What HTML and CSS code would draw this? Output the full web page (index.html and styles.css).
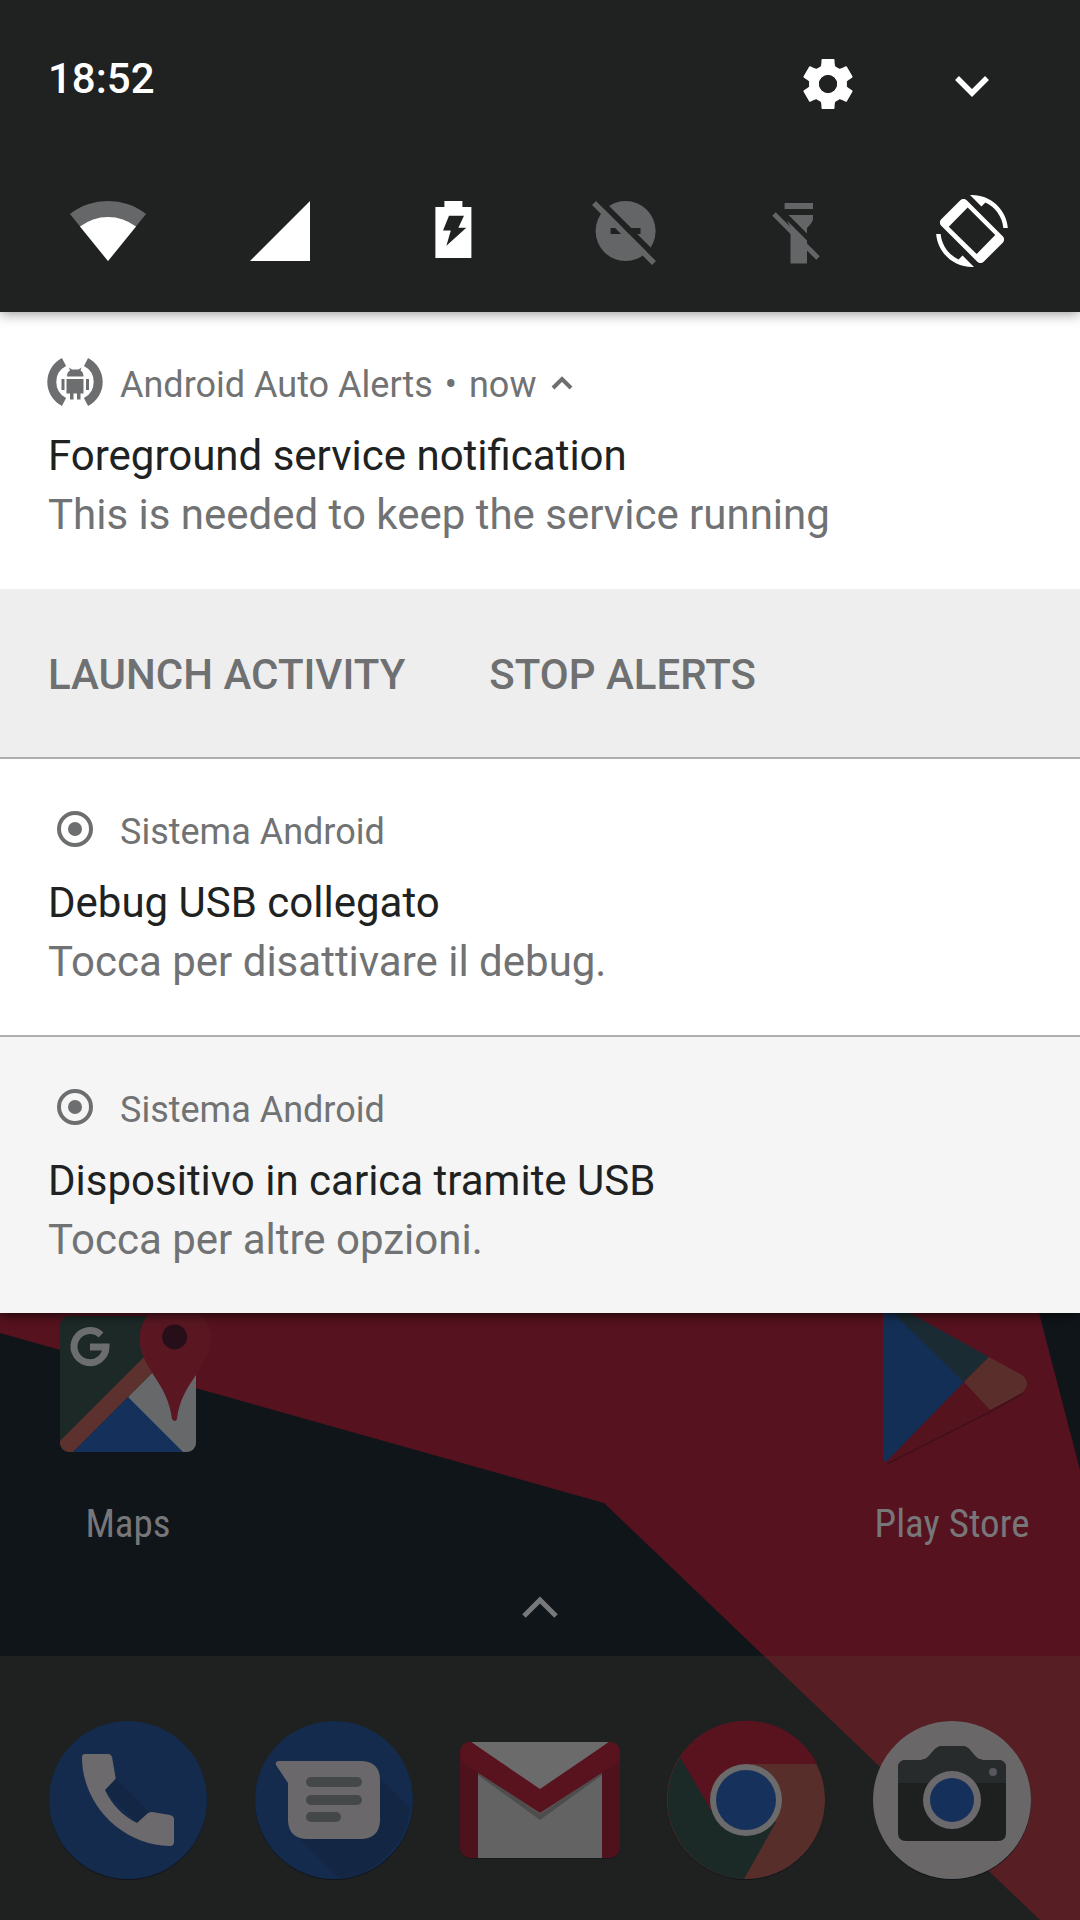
FILE: index.html
```html
<!DOCTYPE html>
<html lang="it">
<head>
<meta charset="utf-8">
<meta name="viewport" content="width=device-width, initial-scale=1">
<title>Notifiche</title>
<link rel="stylesheet" href="styles.css">
</head>
<body>
<div class="screen">
  <div class="shade">
    <header class="status">
      <div class="status-top">
        <time class="clock">18:52</time>
        <div class="status-actions">
          <button class="icon-button" type="button" aria-label="Impostazioni">
            <svg class="icon" viewBox="-36 -36 72 72">
              <defs><path id="tooth" d="M-8 -16 Q-6.500 -18 -6.500 -24 Q-6.500 -25 -5.500 -25 H5.500 Q6.500 -25 6.500 -24 Q6.500 -18 8 -16Z"/></defs>
              <g fill="#fff">
                <use href="#tooth"/><use href="#tooth" transform="rotate(60)"/><use href="#tooth" transform="rotate(120)"/>
                <use href="#tooth" transform="rotate(180)"/><use href="#tooth" transform="rotate(240)"/><use href="#tooth" transform="rotate(300)"/>
                <circle r="14" fill="none" stroke="#fff" stroke-width="10"/>
              </g>
              <circle r="9" fill="#202121"/>
            </svg>
          </button>
          <button class="icon-button" type="button" aria-label="Espandi">
            <svg class="icon" viewBox="0 0 72 72"><path d="M21 30 L36 45 L51 30" fill="none" stroke="#fff" stroke-width="5.500"/></svg>
          </button>
        </div>
      </div>
      <div class="tiles">
        <button class="icon-button" type="button" aria-label="Wi-Fi">
          <svg class="icon" viewBox="0 0 72 72"><path d="M36 66 L-2 19 A62 62 0 0 1 74 19Z" fill="#666768"/><path d="M36 66 L8 31.500 A46 46 0 0 1 64 31.500Z" fill="#fff"/></svg>
        </button>
        <button class="icon-button" type="button" aria-label="Rete mobile">
          <svg class="icon" viewBox="0 0 72 72"><path d="M5 66 H65 V6Z" fill="#fff"/></svg>
        </button>
        <button class="icon-button" type="button" aria-label="Batteria">
          <svg class="icon" viewBox="0 0 72 72"><path d="M17.400 12 H26.400 V6 H44.400 V12 H53.400 V63 H17.400Z" fill="#fff"/><path d="M31 20.700 H46 L40.400 32.700 H48.300 L28.400 50.700 L32.800 35.500 H25Z" fill="#202121"/></svg>
        </button>
        <button class="icon-button" type="button" aria-label="Non disturbare">
          <svg class="icon" viewBox="0 0 72 72"><circle cx="35.600" cy="36" r="30" fill="#646566"/><path d="M20.600 33 H50.500 V39 H20.600Z" fill="#202121"/><path d="M6 2 L70 66" stroke="#202121" stroke-width="6"/><path d="M4 8 L64 68" stroke="#646566" stroke-width="5.500"/></svg>
        </button>
        <button class="icon-button" type="button" aria-label="Torcia">
          <svg class="icon" viewBox="0 0 72 72"><path d="M21.600 8 H50 V14 H21.600Z M21.600 20 H50 V24 Q50 27 44 33 V68.500 H27.500 V33Z" fill="#646566"/><path d="M17 15 L48 46" stroke="#202121" stroke-width="5"/><path d="M11 19 L55 63" stroke="#646566" stroke-width="5"/></svg>
        </button>
        <button class="icon-button" type="button" aria-label="Rotazione automatica">
          <svg class="icon" viewBox="0 0 24 24"><path fill="#fff" fill-rule="evenodd" d="M16.480 2.520c3.270 1.550 5.610 4.720 5.970 8.480h1.500C23.440 4.840 18.290 0 12 0l-.66.03 3.810 3.810 1.330-1.320zm-6.250-.77c-.59-.59-1.540-.59-2.120 0L1.750 8.110c-.59.59-.59 1.540 0 2.120l12.020 12.020c.59.59 1.540.59 2.120 0l6.360-6.360c.59-.59.59-1.540 0-2.120L10.230 1.750zM4.250 10.550 L10.550 4.150 L19.750 13.350 L13.550 19.650Z M7.520 21.480C4.250 19.940 1.910 16.760 1.550 13H.05C.56 19.160 5.710 24 12 24l.66-.03-3.810-3.810-1.330 1.320z"/></svg>
        </button>
      </div>
    </header>

    <main class="notifications">
      <article class="notification">
        <div class="content">
          <div class="meta">
            <svg class="app-icon" viewBox="0 0 54 54">
              <g fill="none" stroke="#6d6e6f" stroke-width="9"><path d="M16 7 A22.500 22.500 0 0 0 16 47"/><path d="M38 7 A22.500 22.500 0 0 1 38 47"/></g>
              <path fill="#6d6e6f" d="M19 21.500 Q19 17 22 15.500 L21 12.500 L24 14.500 H30.500 L33.500 12.500 L32.500 15.500 Q35.500 17 35.500 21.500Z M18.500 24 H35.500 V38.500 H32.500 V44.500 H29 V38.500 H25.500 V44.500 H22 V38.500 H18.500Z M13.500 24 H16.500 V35 H13.500Z M38 24 H41 V35 H38Z"/>
            </svg>
            <span>Android Auto Alerts</span><span>•</span><span>now</span>
            <svg class="collapse" viewBox="0 0 24 24"><path d="M3 15 L12 6 L21 15" fill="none" stroke="#6d6e6f" stroke-width="4"/></svg>
          </div>
          <h2 class="title">Foreground service notification</h2>
          <p class="text">This is needed to keep the service running</p>
        </div>
        <div class="actions">
          <button class="action" type="button">LAUNCH ACTIVITY</button>
          <button class="action" type="button">STOP ALERTS</button>
        </div>
      </article>
      <article class="notification">
        <div class="content">
          <div class="meta">
            <svg class="app-icon" viewBox="0 0 54 54"><circle cx="27" cy="27" r="16" fill="none" stroke="#6d6e6f" stroke-width="4"/><circle cx="27" cy="27" r="7" fill="#6d6e6f"/></svg>
            <span>Sistema Android</span>
          </div>
          <h2 class="title">Debug USB collegato</h2>
          <p class="text">Tocca per disattivare il debug.</p>
        </div>
      </article>
      <article class="notification muted">
        <div class="content">
          <div class="meta">
            <svg class="app-icon" viewBox="0 0 54 54"><circle cx="27" cy="27" r="16" fill="none" stroke="#6d6e6f" stroke-width="4"/><circle cx="27" cy="27" r="7" fill="#6d6e6f"/></svg>
            <span>Sistema Android</span>
          </div>
          <h2 class="title">Dispositivo in carica tramite USB</h2>
          <p class="text">Tocca per altre opzioni.</p>
        </div>
      </article>
    </main>
  </div>

  <section class="home">
    <svg class="wallpaper" viewBox="0 0 1080 607" preserveAspectRatio="none">
      <path fill="#10151a" d="M0 0H1080V607H0Z"/>
      <path fill="#56121e" d="M0 0 H1039 L1080 157 V607 H1040 L604 190 L0 20Z"/>
    </svg>
    <nav class="apps">
      <a class="app" href="#maps">
        <svg class="launcher" viewBox="0 0 136 136">
          <defs><clipPath id="tile"><rect y="0" width="136" height="136" rx="9"/></clipPath></defs>
          <g clip-path="url(#tile)">
            <path fill="#1c2927" d="M0 0H136V136H0Z"/>
            <path fill="#67686a" d="M68 81 L110 39 H136 V136 H110Z"/>
            <path fill="#5d322e" d="M0 125 L84 41 L100 49 L13 136 H0Z"/>
            <path fill="#15305a" d="M68 81 L13 136 H123Z"/>
          </g>
          <path fill="#5a1722" d="M79.500 22 C79.500 52 108 66 112 103 Q115 107 117 103 C121 66 150.700 52 150.700 22 A35.600 35.600 0 0 0 79.500 22Z"/>
          <circle cx="114.600" cy="21" r="12.500" fill="#260f18"/>
          <path d="M41 19 A16 16 0 1 0 46 31 H30" fill="none" stroke="#6c6d6e" stroke-width="7"/>
        </svg>
        <span class="label">Maps</span>
      </a>
      <a class="app play" href="#play-store">
        <svg class="launcher" viewBox="0 0 136 136">
          <path d="M3 148 L106 96 L139 77" fill="none" stroke="#330f17" stroke-width="1"/>
          <path fill="#55131e" d="M80 66 L106 94 L2 146Z"/>
          <path fill="#142f56" d="M-1 -14 L80 66 L2 146 Q-1 144 -1 140Z"/>
          <path fill="#1b2b33" d="M-2 -14 L6 -14 L105 41 L80 66Z"/>
          <path fill="#592e2b" d="M105 41 L138 59 Q148 67 138 77 L106 94 L80 66Z"/>
        </svg>
        <span class="label">Play Store</span>
      </a>
    </nav>
    <button class="drawer" type="button" aria-label="Tutte le app">
      <svg class="drawer-icon" viewBox="0 0 36 24"><path d="M2 20 L18 4 L34 20" fill="none" stroke="#77787a" stroke-width="5"/></svg>
    </button>
    <nav class="dock">
      <a href="#telefono" aria-label="Telefono">
        <svg class="dock-icon" viewBox="0 0 160 160">
          <circle cx="80" cy="81" r="79" fill="#11161c"/><circle cx="80" cy="80" r="79" fill="#142b4e"/>
          <path fill="#132745" d="M67 58 L110 101 L89 103 L57 70Z"/>
          <path fill="#6c6a6c" d="M34 37 Q34 34 37 34 H60 Q63 34 64 37 L67.500 57 Q68 59 66.500 60 L57 70 C64 85 75 96 89 103 L100 93 Q102 92 104 92 L122 95 Q126 96 126 99 V122 Q126 126 122 126 C74 125 34 85 34 37Z"/>
        </svg>
      </a>
      <a href="#messaggi" aria-label="Messaggi">
        <svg class="dock-icon" viewBox="0 0 160 160">
          <circle cx="80" cy="81" r="79" fill="#11161c"/><circle cx="80" cy="80" r="79" fill="#142b4e"/>
          <path fill="#132745" d="M126 58 L156 88 A79 79 0 0 1 85 158 L46 119 H110Z"/>
          <path fill="#6a686a" d="M25 41 H108 Q126 42 126 60 V101 Q125 118 108 119 H52 Q35 118 34 101 V63 L22 45 Q21 41 25 41Z"/>
          <g fill="#444849"><rect x="52" y="57" width="56" height="10" rx="5"/><rect x="52" y="75" width="56" height="10" rx="5"/><rect x="52" y="92" width="35" height="10" rx="5"/></g>
        </svg>
      </a>
      <a href="#gmail" aria-label="Gmail">
        <svg class="dock-icon" viewBox="0 0 160 160">
          <rect y="24" width="160" height="115" rx="10" fill="#14191d"/>
          <rect y="22" width="160" height="116" rx="10" fill="#4e121d"/>
          <path fill="#646363" d="M18 40 H142 V138 H18Z"/>
          <path fill="#6b6b6c" d="M11 22 H149 L80 72Z"/>
          <path fill="#4e4d4e" d="M18 52 L80 94 L142 52 V55 L80 100 L18 55Z"/>
          <path fill="#59131f" d="M0 34 Q0 22 11 22 L80 69 L149 22 Q160 22 160 34 V38 Q158 42 154 45 L80 93 L6 45 Q0 41 0 34Z"/>
        </svg>
      </a>
      <a href="#chrome" aria-label="Chrome">
        <svg class="dock-icon" viewBox="0 0 160 160">
          <circle cx="80" cy="81" r="79" fill="#11161c"/><circle cx="80" cy="80" r="79" fill="#582e2b"/>
          <path fill="#1b2927" d="M80 80 L45 90 L15 36 A79 79 0 0 0 78 159 L110 102Z"/>
          <path fill="#58131f" d="M80 80 L45 90 L14 37 A79 79 0 0 1 151 44 H80Z"/>
          <circle cx="80" cy="80" r="36" fill="#6c6b6c"/><circle cx="80" cy="80" r="30" fill="#15315c"/>
        </svg>
      </a>
      <a href="#fotocamera" aria-label="Fotocamera">
        <svg class="dock-icon" viewBox="0 0 160 160">
          <circle cx="80" cy="81" r="79" fill="#11161c"/><circle cx="80" cy="80" r="79" fill="#696768"/>
          <path fill="#1e2020" d="M34 40 H49 Q53 40 56 37 L62 30 Q66 26 70 26 H90 Q95 26 98 30 L104 37 Q107 40 111 40 H126 Q134 40 134 48 V113 Q134 121 126 121 H34 Q26 121 26 113 V48 Q26 40 34 40Z"/>
          <path fill="#282b2c" d="M34 40 H49 Q53 40 56 37 L62 30 Q66 26 70 26 H90 Q95 26 98 30 L104 37 Q107 40 111 40 H126 Q134 40 134 48 V63 H26 V48 Q26 40 34 40Z"/>
          <circle cx="80" cy="80" r="29" fill="#6b696b"/><circle cx="80" cy="80" r="22" fill="#15305b"/><circle cx="121" cy="52" r="4" fill="#58565f"/>
        </svg>
      </a>
    </nav>
  </section>
</div>
</body>
</html>
```
FILE: styles.css
```css
* {
  box-sizing: border-box;
}

body {
  margin: 0;
  background: #10151a;
  font-family: Roboto, "Noto Sans", sans-serif;
}

button {
  padding: 0;
  border: 0;
  background: none;
  color: inherit;
  font: inherit;
  cursor: pointer;
}

svg {
  display: block;
  overflow: visible;
}

.screen {
  display: flex;
  flex-direction: column;
  min-height: 100vh;
  overflow: hidden;
}

.shade {
  position: relative;
  z-index: 1;
  box-shadow: 0 2px 10px rgba(0, 0, 0, 0.7);
}

/* Quick settings header */
.status {
  position: relative;
  z-index: 1;
  display: flex;
  flex-direction: column;
  gap: 75px;
  padding: 48px 72px 45px 48px;
  background: #202121;
  box-shadow: 0 2px 12px rgba(0, 0, 0, 0.4);
  color: #fff;
}

.status-top {
  display: flex;
  align-items: flex-start;
  justify-content: space-between;
}

.clock {
  font-size: 42px;
  font-weight: 500;
  line-height: 62px;
}

.status-actions {
  display: flex;
  gap: 72px;
}

.tiles {
  display: flex;
  justify-content: space-between;
  padding-left: 24px;
}

.icon {
  width: 72px;
  height: 72px;
}

/* Notification list */
.notification {
  background: #fff;
}

.notification + .notification {
  border-top: 2px solid #afafaf;
}

.notification.muted {
  background: #f5f5f5;
}

.content {
  padding: 43px 48px 45px;
}

.notification + .notification .content {
  padding-bottom: 44px;
}

.meta {
  display: flex;
  gap: 12px;
  margin-bottom: 11px;
  color: #717273;
  font-size: 36px;
  line-height: 60px;
}

.app-icon {
  width: 54px;
  height: 54px;
  margin-right: 6px;
}

.collapse {
  width: 24px;
  height: 24px;
  margin: 18px 0 0 2px;
}

.title,
.text {
  margin: 0;
  font-size: 42px;
  font-weight: 400;
  line-height: 59px;
}

.title {
  color: #202222;
}

.text {
  color: #717273;
}

.actions {
  display: flex;
  gap: 84px;
  padding: 56px 48px 52px;
  background: #eee;
}

.action {
  color: #6f7071;
  font-size: 42px;
  font-weight: 500;
  line-height: 60px;
}

/* Dimmed launcher */
.home {
  position: relative;
  display: flex;
  flex: 1;
  flex-direction: column;
}

.wallpaper {
  position: absolute;
  inset: 0;
  width: 100%;
  height: 100%;
}

.apps,
.dock {
  position: relative;
  display: grid;
  grid-template-columns: repeat(5, 1fr);
  padding: 3px 25px 0;
  justify-items: center;
}

.app {
  display: flex;
  flex-direction: column;
  align-items: center;
  gap: 48px;
  color: #77777a;
  text-decoration: none;
}

.play {
  grid-column: 5;
}

.launcher {
  width: 136px;
  height: 136px;
}

.label {
  font-family: "Roboto Condensed", Roboto, sans-serif;
  font-size: 39px;
  line-height: 48px;
  white-space: nowrap;
}

.drawer {
  position: relative;
  align-self: center;
  margin: 48px 0 36px;
}

.drawer-icon {
  width: 36px;
  height: 24px;
}

.dock {
  margin-top: auto;
  padding: 64px 25px 40px;
  background: rgba(95, 84, 58, 0.19);
}

.dock-icon {
  width: 160px;
  height: 160px;
}
```
